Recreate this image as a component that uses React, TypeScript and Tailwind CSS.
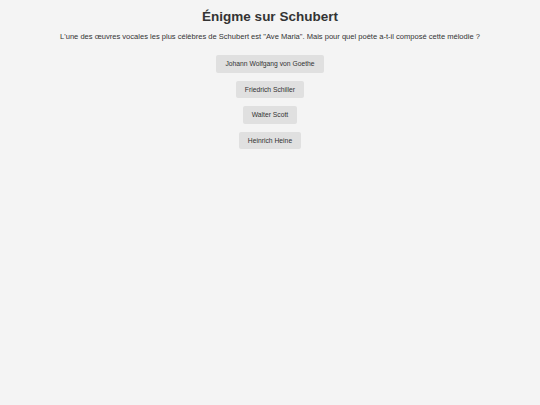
import React from 'react';

const answers = [
  'Johann Wolfgang von Goethe',
  'Friedrich Schiller',
  'Walter Scott',
  'Heinrich Heine',
];

const App: React.FC = () => {
  return (
    <div className="min-h-screen w-full bg-[#f4f4f4] text-center text-[#333] font-['Liberation_Sans',Arial,sans-serif] pt-[9px]">
      <h1 className="text-[13.5px] font-bold leading-[15.5px]">Énigme sur Schubert</h1>
      <p className="mt-[8px] text-[7.56px] leading-[8.7px]">
        L'une des œuvres vocales les plus célèbres de Schubert est "Ave Maria". Mais pour quel poète a-t-il composé cette mélodie ?
      </p>
      <div className="mt-[14px] flex flex-col items-center gap-[8px]">
        {answers.map(a => (
          <button
            key={a}
            className="h-[17.5px] px-[9px] rounded-[2px] bg-[#e0e0e0] text-[6.75px] leading-[7.8px] text-[#333] cursor-pointer hover:bg-[#d5d5d5]"
          >
            {a}
          </button>
        ))}
      </div>
    </div>
  );
};

export default App;
